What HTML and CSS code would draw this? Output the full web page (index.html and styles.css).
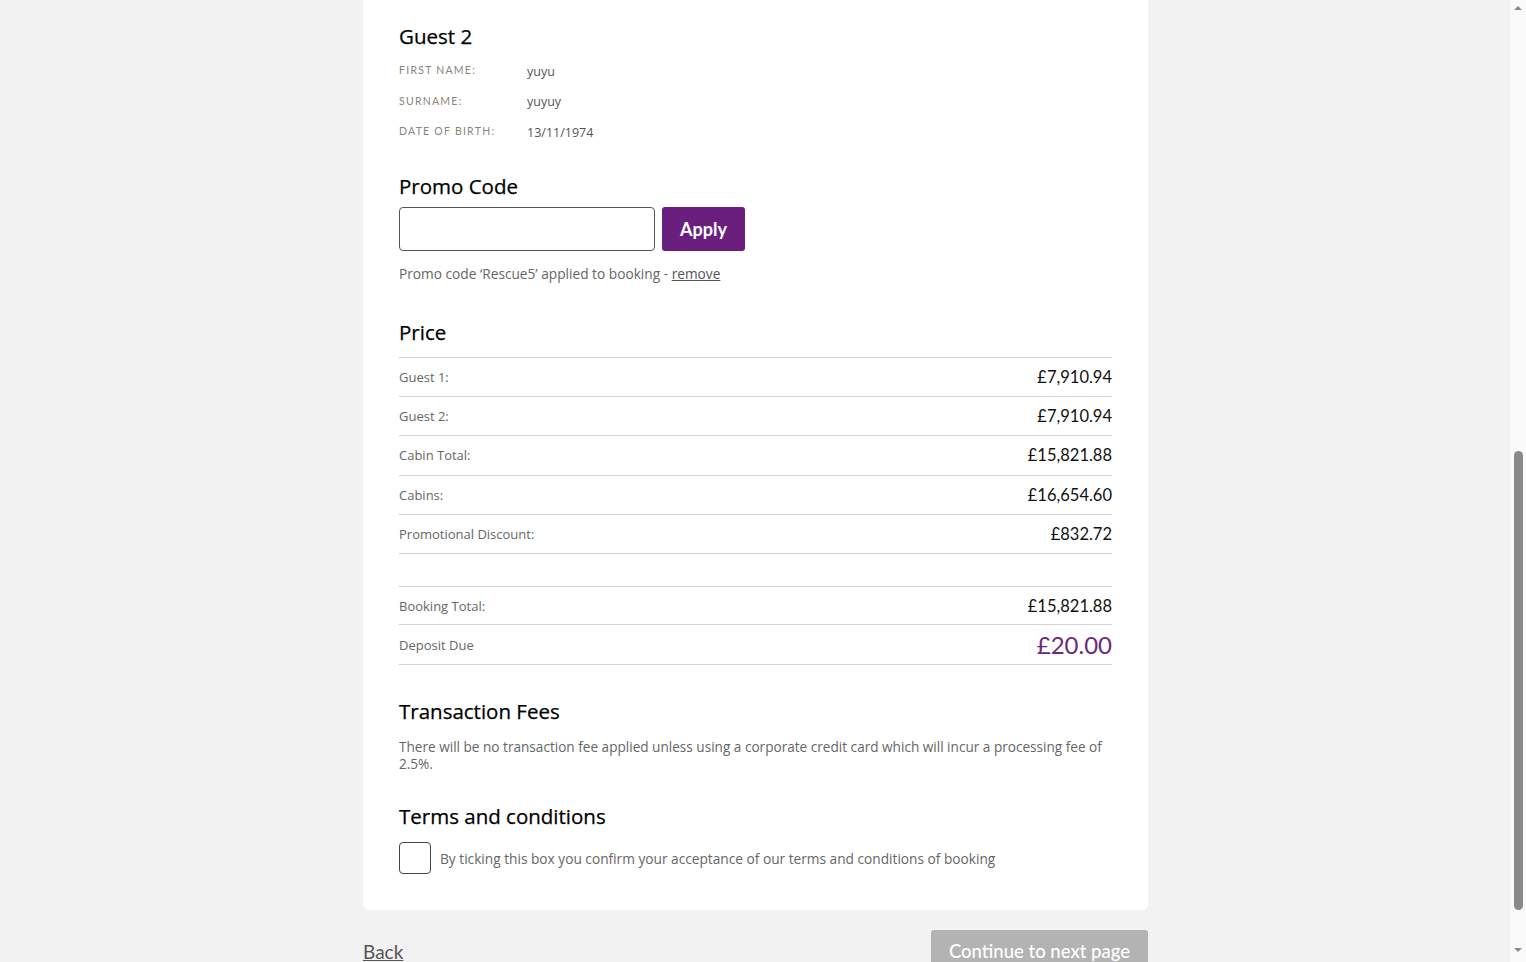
FILE: index.html
```html
<!DOCTYPE html>
<html lang="en">
<head>
<meta charset="utf-8">
<title>Booking summary</title>
<link rel="stylesheet" href="styles.css">
</head>
<body>
<div class="viewport">
  <div class="page">
    <div class="container">
      <section class="card">
        <h2 class="heading">Guest 2</h2>
        <dl class="info">
          <div class="info-row"><dt>First name:</dt><dd>yuyu</dd></div>
          <div class="info-row"><dt>Surname:</dt><dd>yuyuy</dd></div>
          <div class="info-row"><dt>Date of birth:</dt><dd>13/11/1974</dd></div>
        </dl>

        <h2 class="heading promo-heading">Promo Code</h2>
        <div class="promo-form">
          <input class="promo-input" type="text" aria-label="Promo code">
          <button class="apply-btn" type="button">Apply</button>
        </div>
        <p class="promo-note">Promo code ‘Rescue5’ applied to booking - <a href="#" class="remove">remove</a></p>

        <h2 class="heading price-heading">Price</h2>
        <div class="price-table">
          <div class="price-row"><span class="p-label">Guest 1:</span><span class="p-value">£7,910.94</span></div>
          <div class="price-row"><span class="p-label">Guest 2:</span><span class="p-value">£7,910.94</span></div>
          <div class="price-row"><span class="p-label">Cabin Total:</span><span class="p-value">£15,821.88</span></div>
          <div class="price-row"><span class="p-label">Cabins:</span><span class="p-value">£16,654.60</span></div>
          <div class="price-row"><span class="p-label">Promotional Discount:</span><span class="p-value">£832.72</span></div>
          <div class="price-row spacer-row"></div>
          <div class="price-row total-row"><span class="p-label">Booking Total:</span><span class="p-value">£15,821.88</span></div>
          <div class="price-row deposit-row"><span class="p-label">Deposit Due</span><span class="p-value deposit">£20.00</span></div>
        </div>

        <h2 class="heading fees-heading">Transaction Fees</h2>
        <p class="fees-text">There will be no transaction fee applied unless using a corporate credit card which will incur a processing fee of 2.5%.</p>

        <h2 class="heading terms-heading">Terms and conditions</h2>
        <label class="terms">
          <span class="checkbox"></span>
          <span class="terms-text">By ticking this box you confirm your acceptance of our terms and conditions of booking</span>
        </label>
      </section>

      <div class="footer-nav">
        <a href="#" class="back">Back</a>
        <button class="continue-btn" type="button">Continue to next page</button>
      </div>
    </div>
  </div>
  <div class="scrollbar" aria-hidden="true">
    <span class="arrow up"></span>
    <span class="thumb"></span>
    <span class="arrow down"></span>
  </div>
</div>
</body>
</html>
```

FILE: styles.css
```css
* { box-sizing: border-box; }

html, body {
  margin: 0;
  padding: 0;
  height: 100%;
  overflow: hidden;
}

body {
  font-family: "Open Sans", "Noto Sans", "Liberation Sans", sans-serif;
  background: #f2f2f2;
  color: #222;
}

.viewport {
  display: flex;
  height: 962px;
}

.page {
  flex: 1;
  overflow: hidden;
  padding-left: 2px;
}

.container {
  width: 785px;
  margin: 0 auto;
}

.card {
  background: #fff;
  border-radius: 0 0 6px 6px;
  padding: 24px 36px 36px;
}

.heading {
  margin: 0;
  font-size: 20.5px;
  line-height: 24px;
  font-weight: 500;
  color: #000;
  -webkit-text-stroke: 0.25px #000;
}

.info {
  margin: 7px 0 0;
}

.info-row {
  display: flex;
  align-items: center;
  height: 30.5px;
}

.info-row dt {
  width: 128px;
  font-family: Lato, "Open Sans", sans-serif;
  font-size: 10.5px;
  letter-spacing: 1.25px;
  text-transform: uppercase;
  color: #8a837c;
}

.info-row dd {
  margin: 0;
  padding-top: 2px;
  font-size: 12.5px;
  color: #555;
}

.promo-heading { margin-top: 27px; }

.promo-form {
  display: flex;
  gap: 7px;
  margin-top: 9px;
}

.promo-input {
  width: 256px;
  height: 44px;
  border: 1px solid #555;
  border-radius: 4px;
  padding: 0 10px;
  font: inherit;
}

.apply-btn {
  width: 83px;
  height: 44px;
  border: 0;
  border-radius: 3px;
  background: #6a1f7f;
  color: #fff;
  font-family: Lato, "Open Sans", sans-serif;
  font-size: 18px;
  font-weight: 700;
}

.promo-note {
  margin: 14px 0 0;
  font-size: 13.7px;
  line-height: 18px;
  color: #666;
}

.remove {
  color: #555;
  text-decoration: underline;
}

.price-heading { margin-top: 37px; }

.price-table {
  margin-top: 13px;
  border-top: 1px solid #d4d4d4;
}

.price-row {
  display: flex;
  justify-content: space-between;
  align-items: center;
  height: 39.4px;
  border-bottom: 1px solid #d4d4d4;
}

.spacer-row { height: 33px; }
.total-row { height: 38px; }
.deposit-row { height: 40px; }

.p-label {
  font-size: 13px;
  color: #666;
}

.p-value {
  font-family: Lato, "Open Sans", sans-serif;
  font-size: 16.5px;
  color: #111;
}

.p-value.deposit {
  font-size: 24px;
  color: #6a2a7c;
}

.fees-heading { margin-top: 34px; }

.fees-text {
  margin: 15px 0 0;
  font-size: 13.6px;
  line-height: 17px;
  color: #666;
  padding-right: 4px;
}

.terms-heading { margin-top: 32px; }

.terms {
  display: flex;
  align-items: center;
  gap: 9px;
  margin-top: 14px;
}

.checkbox {
  width: 32px;
  height: 32px;
  border: 1px solid #444;
  border-radius: 4px;
  flex: none;
}

.terms-text {
  font-size: 13.7px;
  color: #666;
}

.footer-nav {
  display: flex;
  justify-content: space-between;
  align-items: center;
  margin-top: 20px;
}

.back {
  font-family: Lato, "Open Sans", sans-serif;
  font-size: 19px;
  color: #555;
  text-decoration: underline;
}

.continue-btn {
  width: 217px;
  height: 42px;
  border: 0;
  border-radius: 3px;
  background: #b3b3b3;
  color: #fff;
  font-family: Lato, "Open Sans", sans-serif;
  font-size: 18.5px;
  font-weight: 500;
}

.scrollbar {
  width: 17px;
  flex: none;
  background: #fafafa;
  border-left: 1px solid #ededed;
  display: flex;
  flex-direction: column;
  align-items: center;
}

.arrow {
  width: 0;
  height: 0;
  border-left: 4px solid transparent;
  border-right: 4px solid transparent;
}

.arrow.up {
  margin-top: 6px;
  border-bottom: 4px solid #8a8a8a;
}

.thumb {
  width: 9px;
  height: 459px;
  margin-top: auto;
  border-radius: 5px;
  background: #8a8a8a;
}

.arrow.down {
  margin-top: 38px;
  margin-bottom: 10px;
  border-top: 4px solid #8a8a8a;
}
```
